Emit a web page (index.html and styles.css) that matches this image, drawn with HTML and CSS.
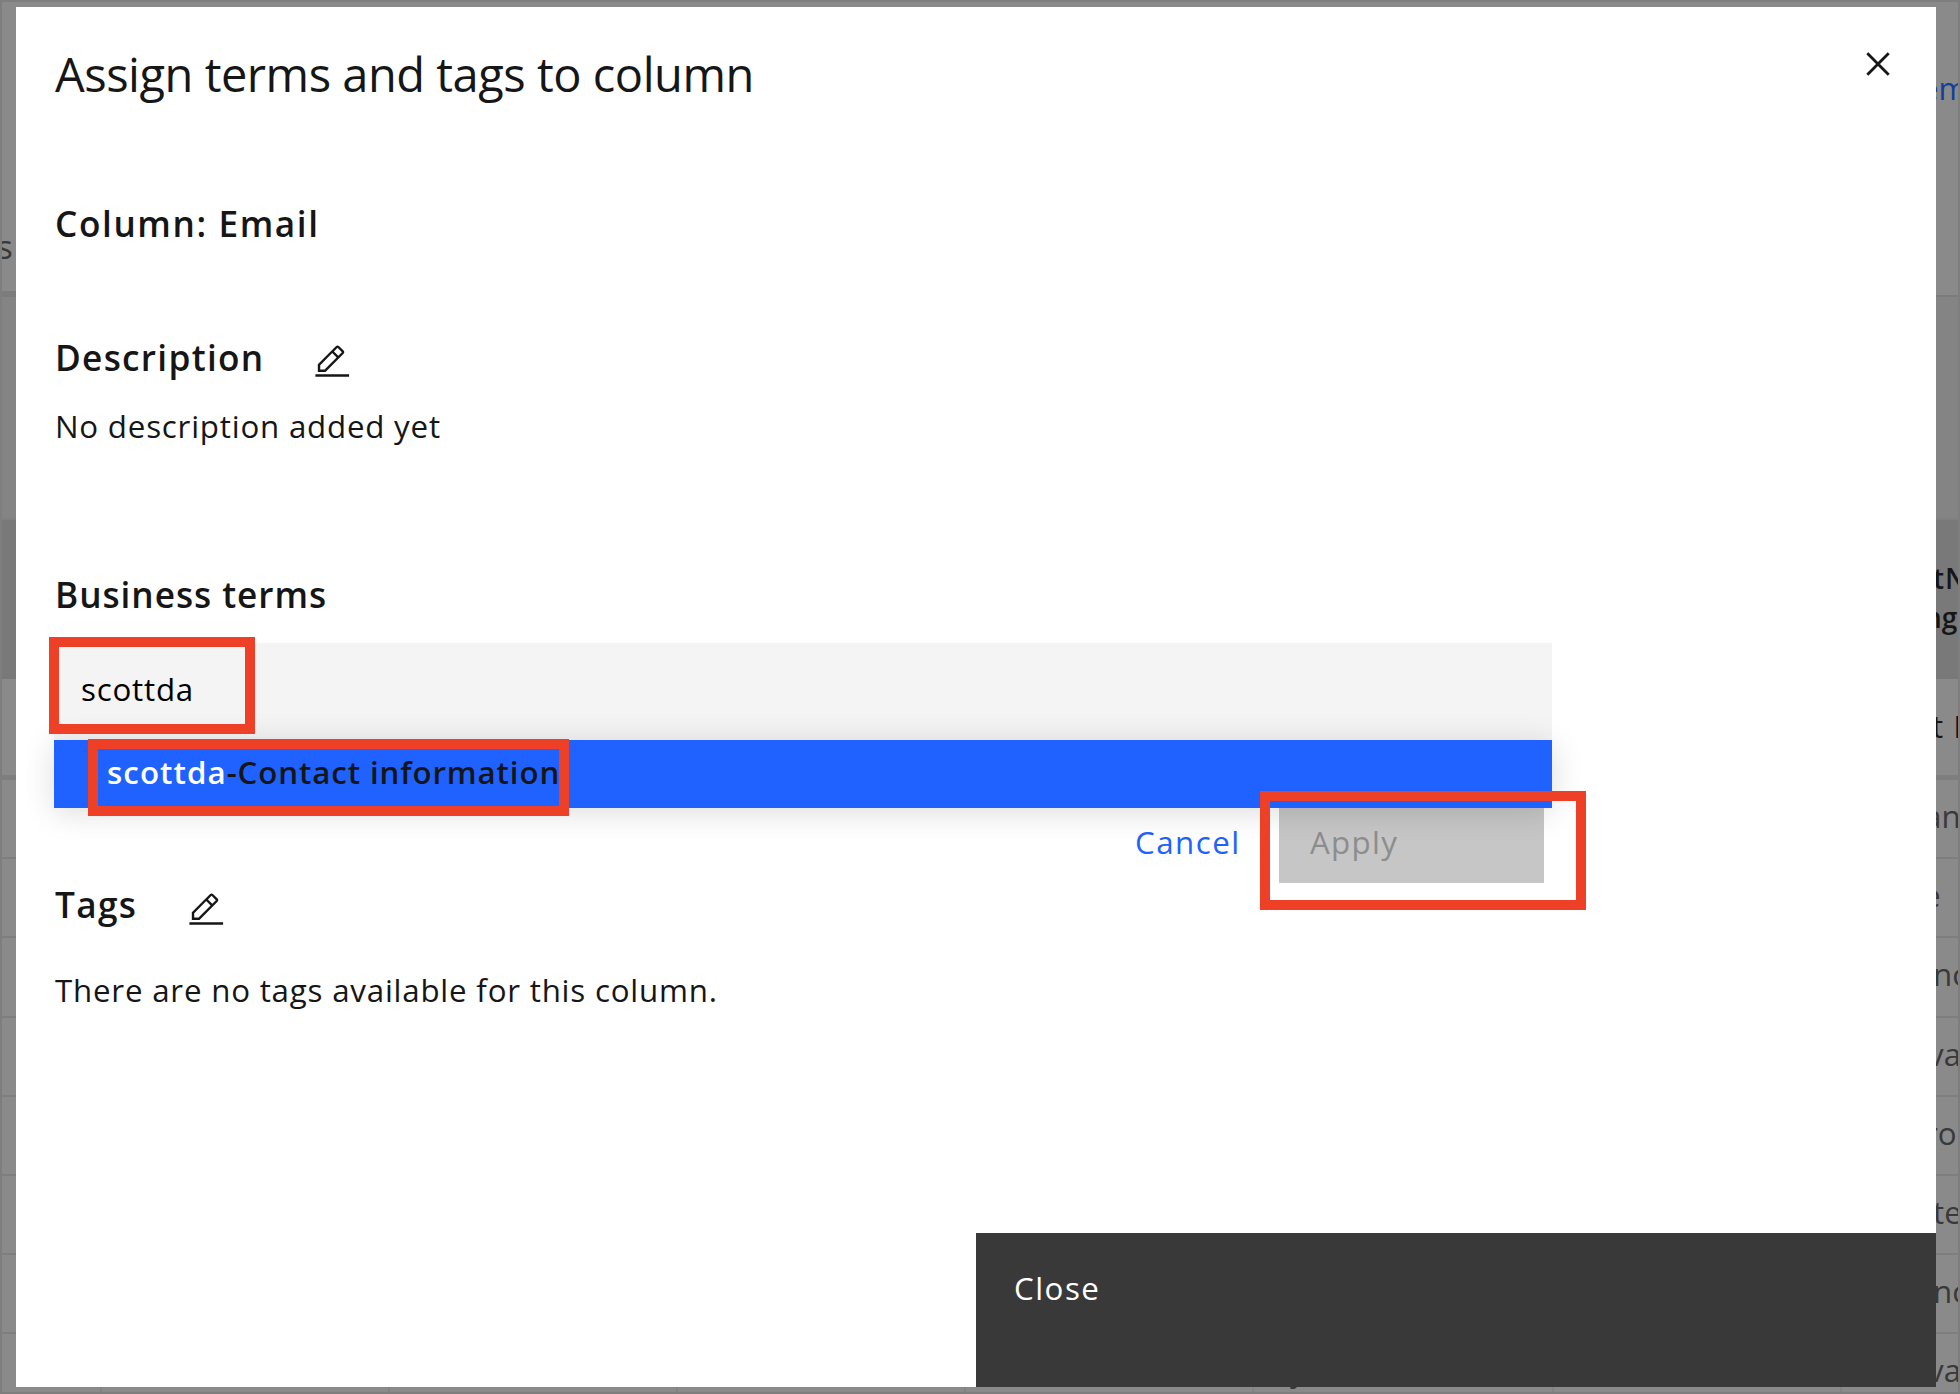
FILE: index.html
```html
<!DOCTYPE html>
<html lang="en">
<head>
<meta charset="utf-8">
<title>Assign terms and tags to column</title>
<link rel="stylesheet" href="styles.css">
</head>
<body>
<div class="page">
  <div class="page-tabs"><span class="tab-label">s</span><span class="page-link">em</span></div>
  <div class="page-toolbar"></div>
  <div class="table-head"><span class="col-name">tN</span><span class="col-type">ng</span></div>
  <div class="table-filter"><span>t F</span></div>
  <div class="row r1"><span>an</span></div>
  <div class="row r2"><span>e</span></div>
  <div class="row r3"><span>nc</span></div>
  <div class="row r4"><span>va</span></div>
  <div class="row r5"><span>ro</span></div>
  <div class="row r6"><span>te</span></div>
  <div class="row r3"><span>nc</span></div>
  <div class="row last"><span class="mid">y</span><span>va</span></div>
</div>

<div class="modal" role="dialog">
  <header class="modal-header">
    <h1 class="title">Assign terms and tags to column</h1>
    <svg class="close-icon" viewBox="0 0 24 24"><path d="M1.3 1.3 22.7 22.7M22.7 1.3 1.3 22.7"/></svg>
  </header>
  <main class="content">
    <h2 class="heading column-name">Column: Email</h2>
    <div class="heading-row description-row">
      <h2 class="heading description">Description</h2>
      <svg class="edit-icon" viewBox="0 0 32 32"><path d="M2 26h28v2H2zM25.4 9c.8-.8.8-2 0-2.8l-3.6-3.6c-.8-.8-2-.8-2.8 0l-15 15V24h6.4l15-15zM20.4 4 24 7.6l-3 3L17.4 7l3-3zM6 22v-3.6l10-10 3.6 3.6-10 10H6z"/></svg>
    </div>
    <p class="text no-description">No description added yet</p>
    <h2 class="heading business">Business terms</h2>
    <div class="search">
      <span class="text query">scottda</span>
      <div class="dropdown">
        <div class="option"><span class="match">scottda</span>-Contact information</div>
        <div class="mark mark-option"></div>
      </div>
      <div class="mark mark-query"></div>
    </div>
    <div class="actions">
      <span class="text cancel">Cancel</span>
      <div class="apply"><span class="text apply-label">Apply</span><div class="mark mark-apply"></div></div>
    </div>
    <div class="heading-row tags-row">
      <h2 class="heading tags">Tags</h2>
      <svg class="edit-icon" viewBox="0 0 32 32"><path d="M2 26h28v2H2zM25.4 9c.8-.8.8-2 0-2.8l-3.6-3.6c-.8-.8-2-.8-2.8 0l-15 15V24h6.4l15-15zM20.4 4 24 7.6l-3 3L17.4 7l3-3zM6 22v-3.6l10-10 3.6 3.6-10 10H6z"/></svg>
    </div>
    <p class="text no-tags">There are no tags available for this column.</p>
  </main>
  <footer class="modal-footer"><span class="text close-label">Close</span></footer>
</div>
</body>
</html>
```
FILE: styles.css
```css
* { box-sizing: border-box; margin: 0; }
body {
  width: 1960px; height: 1394px; overflow: hidden; position: relative;
  font-family: "Open Sans", sans-serif; color: #161616; background: #7e7e7e;
}

/* Dimmed page behind the dialog */
.page {
  width: 1960px; height: 1394px; border: 2px solid #7e7e7e; background: #8a8a8a;
  display: flex; flex-direction: column; overflow: hidden;
  font-size: 31.3px; line-height: 40px; color: #393939; white-space: nowrap;
}
.page > div { flex: none; overflow: hidden; }
.page-tabs { display: flex; height: 295px; border-bottom: 2px solid #7c7c7c; background: linear-gradient(#7c7c7c, #7c7c7c) 0 289px / 1000px 6px no-repeat; }
.tab-label { width: 1924px; padding-top: 225px; margin-left: -5px; flex: none; font-size: 33px; }
.page-link { padding-top: 66px; color: #123f9c; }
.page-toolbar { height: 223px; background: #848484; border-bottom: 2px solid #808080; }
.table-head { height: 159px; background: #797979; display: flex; flex-direction: column; padding: 39px 0 0 1930px; font-weight: 600; font-size: 28px; line-height: 39px; color: #161616; }
.col-name { margin-left: 1px; letter-spacing: 1px; }
.col-type { margin-left: -8px; }
.table-filter { height: 101px; border-bottom: 5px solid #7e7e7e; padding: 27px 0 0 1930px; color: #161616; letter-spacing: 1px; }
.row { height: 79.2px; border-bottom: 2px solid #7e7e7e; padding-top: 16px; }
.r1 { padding-left: 1922px; }
.r2 { padding-left: 1921px; }
.r3 { padding-left: 1931px; }
.r4 { padding-left: 1926px; }
.r5 { padding-left: 1923px; }
.r6 { padding-left: 1931px; }
.last {
  display: flex; height: 58px; border: 0;
  background:
    linear-gradient(#838383, #838383) 98px 0 / 2px 100% no-repeat,
    linear-gradient(#838383, #838383) 386px 0 / 2px 100% no-repeat,
    linear-gradient(#838383, #838383) 674px 0 / 2px 100% no-repeat,
    linear-gradient(#838383, #838383) 962px 0 / 2px 100% no-repeat,
    linear-gradient(#838383, #838383) 1250px 0 / 2px 100% no-repeat,
    linear-gradient(#838383, #838383) 1550px 0 / 2px 100% no-repeat,
    linear-gradient(#838383, #838383) 1838px 0 / 2px 100% no-repeat;
}
.mid { width: 638px; margin-left: 1288px; flex: none; }

/* Dialog */
.modal { position: absolute; left: 16px; top: 7px; width: 1920px; height: 1380px; background: #fff; display: flex; flex-direction: column; }
.modal-header { display: flex; justify-content: space-between; height: 97px; padding: 37px 46px 0 39px; }
.title { font-size: 47px; font-weight: 400; line-height: 60px; white-space: nowrap; letter-spacing: -.47px; }
.close-icon { width: 24px; height: 24px; margin-top: 7.5px; fill: none; stroke: #161616; stroke-width: 2.8; }
.content { padding-left: 39px; display: flex; flex-direction: column; align-items: flex-start; white-space: nowrap; }
.heading { font-size: 35.2px; font-weight: 600; line-height: 48px; letter-spacing: 1.3px; }
.text { font-size: 31.3px; line-height: 40px; letter-spacing: .78px; }
.column-name { margin-top: 95px; letter-spacing: 1.6px; }
.heading-row { display: flex; height: 48px; }
.edit-icon { width: 38.5px; height: 38.5px; fill: #161616; flex: none; }
.description-row { margin-top: 86px; }
.description { width: 258px; }
.description-row .edit-icon { margin-top: 9.7px; }
.no-description { margin-top: 25px; }
.business { margin-top: 124px; letter-spacing: .96px; }

.search { position: relative; width: 1498px; height: 97px; margin: 25px 0 0 -1px; padding: 26px 0 0 27px; background: #f4f4f4; }
.query { display: block; color: #000; }
.dropdown { position: absolute; z-index: 2; left: 0; top: 97px; width: 1498px; height: 68px; background: #1f62ff; box-shadow: 0 4px 32px rgba(0, 0, 0, .14); }
.option { padding: 12px 0 0 53px; font-size: 31.3px; line-height: 40px; font-weight: 600; letter-spacing: .87px; }
.match { color: #fff; letter-spacing: 1.05px; }
.mark { position: absolute; z-index: 3; border: 10px solid #ed4026; }
.mark-query { left: -5px; top: -6px; width: 206px; height: 97px; }
.mark-option { left: 34px; top: -1px; width: 481px; height: 77px; }
.mark-apply { left: -19px; top: 7px; width: 326px; height: 119px; }

.actions { display: flex; margin-top: 44px; height: 99px; }
.cancel { width: 144px; margin-left: 1080px; padding-top: 38px; color: #1f62ff; letter-spacing: 1.5px; }
.apply { position: relative; width: 265px; height: 99px; background: #c6c6c6; padding: 38px 0 0 31px; }
.apply-label { display: block; color: #8d8d8d; letter-spacing: 1.3px; }
.tags-row { height: 42px; }
.tags { width: 132px; line-height: 42px; }
.tags-row .edit-icon { margin-top: 7.7px; }
.no-tags { margin-top: 45px; }

.modal-footer { width: 960px; height: 154px; margin: auto 0 0 auto; padding: 35px 0 0 38px; background: #393939; color: #fff; }
.close-label { display: block; letter-spacing: 1.5px; }
```
